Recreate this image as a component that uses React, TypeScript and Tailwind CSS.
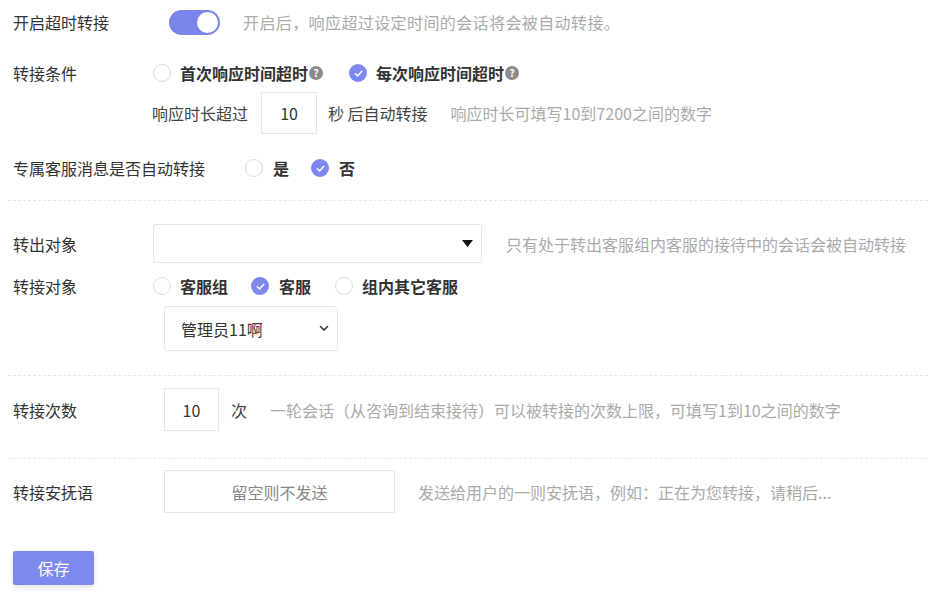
import React from "react";

const Radio = ({ checked }: { checked?: boolean }) =>
  checked ? (
    <span className="flex h-[18px] w-[18px] shrink-0 items-center justify-center rounded-full bg-[#7d88ee]">
      <svg width="11" height="11" viewBox="0 0 12 12" fill="none">
        <path d="M2.5 6.2 L5 8.6 L9.6 3.6" stroke="white" strokeWidth="1.6" strokeLinecap="round" strokeLinejoin="round" />
      </svg>
    </span>
  ) : (
    <span className="block h-[18px] w-[18px] shrink-0 rounded-full border border-[#dcdcdc] bg-white" />
  );

const Help = () => (
  <span className="ml-[1px] inline-flex h-[14px] w-[14px] items-center justify-center rounded-full bg-[#8c8c8c] text-[10px] font-bold leading-none text-white">
    ?
  </span>
);

const Divider = ({ mt }: { mt: string }) => (
  <div className={`ml-[8px] w-[920px] border-t border-dashed border-[#e6e6e6] ${mt}`} />
);

export default function App() {
  return (
    <div className="h-[591px] w-[930px] overflow-hidden bg-white text-[16px] text-[#333] [font-family:'Noto_Sans_CJK_SC','Noto_Sans',sans-serif]">
      {/* Row 1 */}
      <div className="flex h-[44px] items-center pl-[13px]">
        <span className="w-[156px]">开启超时转接</span>
        <span className="relative flex h-[25px] w-[51px] items-center rounded-full bg-[#7a85ec]">
          <span className="absolute right-[2px] h-[21px] w-[21px] rounded-full bg-white" />
        </span>
        <span className="ml-[23px] tracking-[0.4px] text-[#aaa]">开启后，响应超过设定时间的会话将会被自动转接。</span>
      </div>

      {/* Row 2 */}
      <div className="mt-[15px] flex h-[28px] items-center pl-[13px]">
        <span className="w-[140px]">转接条件</span>
        <Radio />
        <span className="ml-[9px] flex items-center font-bold text-[#333]">
          首次响应时间超时
          <Help />
        </span>
        <span className="ml-[26px]"><Radio checked /></span>
        <span className="ml-[9px] flex items-center font-bold text-[#333]">
          每次响应时间超时
          <Help />
        </span>
      </div>

      {/* Row 3 */}
      <div className="mt-[5px] flex h-[42px] items-center pl-[152px]">
        <span className="text-[#444]">响应时长超过</span>
        <span className="ml-[13px] flex h-[42px] w-[56px] items-center justify-center border border-[#e6e6e6] text-[#333]">
          10
        </span>
        <span className="ml-[11px] text-[#444]">秒 后自动转接</span>
        <span className="ml-[23px] text-[#aaa]">响应时长可填写10到7200之间的数字</span>
      </div>

      {/* Row 4 */}
      <div className="mt-[20px] flex h-[28px] items-center pl-[13px]">
        <span className="w-[232px]">专属客服消息是否自动转接</span>
        <Radio />
        <span className="ml-[10px] font-bold">是</span>
        <span className="ml-[22px]"><Radio checked /></span>
        <span className="ml-[10px] font-bold">否</span>
      </div>

      <Divider mt="mt-[18px]" />

      {/* Row 5 */}
      <div className="mt-[23px] flex h-[39px] items-center pl-[13px]">
        <span className="w-[140px]">转出对象</span>
        <span className="flex h-[39px] w-[329px] items-center justify-end rounded-[3px] border border-[#e6e6e6] pr-[8px]">
          <svg width="11" height="7" viewBox="0 0 11 7">
            <path d="M0 0 H11 L5.5 7 Z" fill="#111" />
          </svg>
        </span>
        <span className="ml-[24px] text-[#aaa]">只有处于转出客服组内客服的接待中的会话会被自动转接</span>
      </div>

      {/* Row 6 */}
      <div className="mt-[9px] flex h-[28px] items-center pl-[13px]">
        <span className="w-[140px]">转接对象</span>
        <Radio />
        <span className="ml-[9px] font-bold">客服组</span>
        <span className="ml-[23px]"><Radio checked /></span>
        <span className="ml-[10px] font-bold">客服</span>
        <span className="ml-[24px]"><Radio /></span>
        <span className="ml-[9px] font-bold">组内其它客服</span>
      </div>

      {/* Row 7 */}
      <div className="mt-[6px] flex h-[45px] pl-[164px]">
        <span className="flex h-[45px] w-[174px] items-center justify-between rounded-[3px] border border-[#e6e6e6] pl-[16px] pr-[8px]">
          <span className="text-[#333]">管理员11啊</span>
          <svg width="10" height="7" viewBox="0 0 10 7" fill="none">
            <path d="M1.5 1.5 L5 5 L8.5 1.5" stroke="#333" strokeWidth="1.6" strokeLinecap="round" strokeLinejoin="round" />
          </svg>
        </span>
      </div>

      <Divider mt="mt-[24px]" />

      {/* Row 8 */}
      <div className="mt-[12px] flex h-[43px] items-center pl-[13px]">
        <span className="w-[151px]">转接次数</span>
        <span className="flex h-[43px] w-[55px] items-center justify-center border border-[#e6e6e6]">10</span>
        <span className="ml-[12px] text-[#444]">次</span>
        <span className="ml-[23px] text-[#aaa]">一轮会话（从咨询到结束接待）可以被转接的次数上限，可填写1到10之间的数字</span>
      </div>

      <Divider mt="mt-[27px]" />

      {/* Row 9 */}
      <div className="mt-[11px] flex h-[43px] items-center pl-[13px]">
        <span className="w-[151px]">转接安抚语</span>
        <span className="flex h-[43px] w-[231px] items-center justify-center border border-[#e6e6e6] text-[#888]">
          留空则不发送
        </span>
        <span className="ml-[23px] text-[#aaa]">发送给用户的一则安抚语，例如：正在为您转接，请稍后...</span>
      </div>

      {/* Save */}
      <div className="mt-[38px] pl-[13px]">
        <button className="flex h-[34px] w-[81px] items-center justify-center rounded-[2px] bg-[#7d89ef] text-white shadow-[0_2px_6px_rgba(0,0,0,0.12)]">
          保存
        </button>
      </div>
    </div>
  );
}
